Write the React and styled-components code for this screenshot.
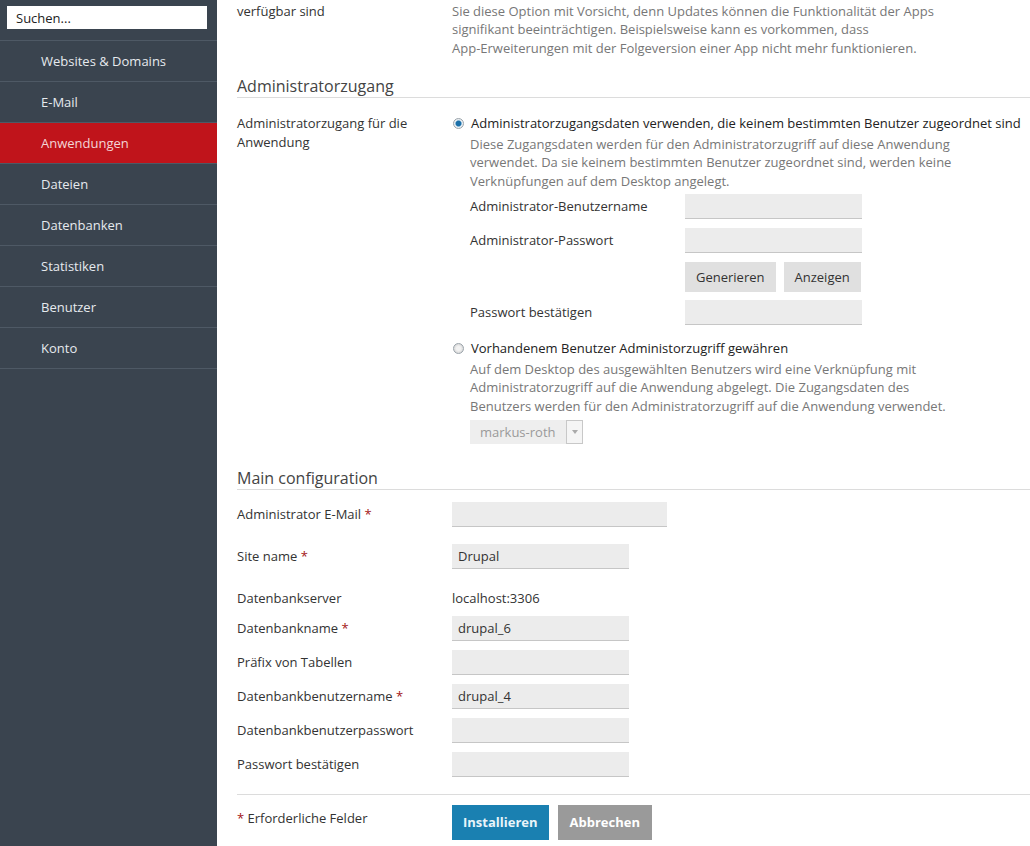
import styled, { createGlobalStyle } from "styled-components";

const GlobalStyle = createGlobalStyle`
  html, body {
    margin: 0;
    padding: 0;
    background: #fff;
    font-family: "Open Sans", "Liberation Sans", sans-serif;
    font-size: 13px;
    color: #333;
  }
  * { box-sizing: border-box; }
`;

const Page = styled.div`
  display: flex;
  height: 846px;
  overflow: hidden;
`;

const Sidebar = styled.nav`
  width: 217px;
  flex-shrink: 0;
  background: #3a444f;
  display: flex;
  flex-direction: column;
`;

const SearchWrap = styled.div`
  padding: 6px 10px 11px 7px;
  border-bottom: 1px solid #4e5965;
`;

const Search = styled.input`
  width: 200px;
  height: 23px;
  border: none;
  outline: none;
  padding: 0 9px;
  font-family: inherit;
  font-size: 13px;
  color: #333;
  background: #fff;
  &::placeholder { color: #222; }
`;

const NavItem = styled.a`
  display: flex;
  align-items: center;
  height: 41px;
  padding-left: 41px;
  color: ${(p) => (p.active ? "#f3d6d6" : "#e6eaee")};
  background: ${(p) => (p.active ? "#c0141b" : "transparent")};
  border-bottom: 1px solid #4e5965;
  font-size: 13px;
  text-decoration: none;
`;

/* page is scrolled a little: the first line sits just above the fold */
const Main = styled.main`
  flex: 1;
  padding: 0 0 0 20px;
  margin-top: -17px;
`;

const Row = styled.div`
  display: grid;
  grid-template-columns: 215px 1fr;
  align-items: ${(p) => (p.top ? "start" : "center")};
  margin-bottom: ${(p) => p.mb || 0}px;
  line-height: 18.5px;
`;

const Label = styled.div`
  color: #333;
`;

const Desc = styled.div`
  color: #777;
  line-height: 18.5px;
  margin-top: ${(p) => p.mt || 0}px;
`;

const Line = styled.span`
  display: block;
  white-space: nowrap;
`;

const Heading = styled.h3`
  margin: ${(p) => p.mt || 0}px 0 ${(p) => p.mb || 0}px;
  padding-bottom: 1px;
  font-size: 16px;
  font-weight: 400;
  color: #444;
  line-height: 20px;
  border-bottom: 1px solid #dcdcdc;
`;

const Star = styled.span`
  color: #a31515;
`;

const Input = styled.input`
  display: block;
  width: ${(p) => p.w || 177}px;
  height: 25px;
  border: none;
  border-bottom: 1px solid #c6c6c6;
  background: #ececec;
  padding: 0 6px;
  font-family: inherit;
  font-size: 13px;
  color: #333;
  outline: none;
`;

const Option = styled.div`
  margin-bottom: ${(p) => p.mb || 0}px;
`;

const RadioLine = styled.label`
  display: flex;
  align-items: center;
  gap: 7px;
  color: #222;
  margin-left: 1px;
`;

const Radio = styled.span`
  width: 11px;
  height: 11px;
  border-radius: 50%;
  border: 1px solid #9aa3aa;
  background: ${(p) =>
    p.checked
      ? "radial-gradient(circle, #1b6fa8 0 2.5px, #7fb3d6 3px, #e9eef2 3.6px)"
      : "radial-gradient(circle, #f2f2f2 0 2px, #d6d6d6 5px)"};
  flex-shrink: 0;
`;

const OptionBody = styled.div`
  padding-left: 18px;
`;

const SubGrid = styled.div`
  display: grid;
  grid-template-columns: 215px 177px;
  row-gap: 9px;
  align-items: center;
  margin-top: 4px;
`;

const ButtonPair = styled.div`
  display: flex;
  gap: 8px;
  grid-column: 2;
  margin-bottom: -1px;
`;

const GrayButton = styled.button`
  height: 30px;
  padding: 0 ${(p) => p.px || 10}px;
  border: none;
  background: #e0e0e0;
  font-family: inherit;
  font-size: 13px;
  color: #333;
`;

const SelectBox = styled.div`
  display: flex;
  align-items: center;
  width: 113px;
  height: 24px;
  margin-top: 5px;
  background: #eeeeee;
  color: #9a9a9a;
  padding-left: 10px;
`;

const SelectText = styled.span`
  flex: 1;
`;

const Arrow = styled.span`
  width: 17px;
  height: 24px;
  border: 1px solid #c8c8c8;
  background: #f5f5f5;
  display: flex;
  align-items: center;
  justify-content: center;
  &::after {
    content: "";
    border-left: 3px solid transparent;
    border-right: 3px solid transparent;
    border-top: 4px solid #aaa;
  }
`;

const Value = styled.div`
  color: #333;
`;

const Footer = styled.div`
  display: grid;
  grid-template-columns: 215px 1fr;
  border-top: 1px solid #dcdcdc;
  margin-top: 17px;
  padding-top: 10px;
`;

const FooterNote = styled.div`
  padding-top: 4px;
  color: #333;
`;

const Actions = styled.div`
  display: flex;
  gap: 9px;
`;

const PrimaryButton = styled.button`
  height: 35px;
  padding: 0 ${(p) => p.px || 13}px;
  border: none;
  background: ${(p) => p.bg};
  color: ${(p) => p.fg || "#fff"};
  font-family: inherit;
  font-size: 13px;
  font-weight: 700;
`;

const navItems = [
  "Websites & Domains",
  "E-Mail",
  "Anwendungen",
  "Dateien",
  "Datenbanken",
  "Statistiken",
  "Benutzer",
  "Konto",
];

const dbRows = [
  { label: "Datenbankname", req: true, value: "drupal_6" },
  { label: "Präfix von Tabellen", value: "" },
  { label: "Datenbankbenutzername", req: true, value: "drupal_4" },
  { label: "Datenbankbenutzerpasswort", value: "" },
  { label: "Passwort bestätigen", value: "" },
];

export default function App() {
  return (
    <>
      <GlobalStyle />
      <Page>
        <Sidebar>
          <SearchWrap>
            <Search placeholder="Suchen..." />
          </SearchWrap>
          {navItems.map((item) => (
            <NavItem key={item} active={item === "Anwendungen"}>
              {item}
            </NavItem>
          ))}
        </Sidebar>

        <Main>
          <Row top mb={19}>
            <Label>
              <Line>Automatisch aktualisieren, wenn Updates</Line>
              <Line>verfügbar sind</Line>
            </Label>
            <Desc>
              <Line>Apps werden automatisch aktualisiert, sobald Updates verfügbar sind. Verwenden</Line>
              <Line>Sie diese Option mit Vorsicht, denn Updates können die Funktionalität der Apps</Line>
              <Line>signifikant beeinträchtigen. Beispielsweise kann es vorkommen, dass</Line>
              <Line>App-Erweiterungen mit der Folgeversion einer App nicht mehr funktionieren.</Line>
            </Desc>
          </Row>

          <Heading mb={16}>Administratorzugang</Heading>

          <Row top>
            <Label>
              <Line>Administratorzugang für die</Line>
              <Line>Anwendung</Line>
            </Label>
            <div>
              <Option mb={14}>
                <RadioLine>
                  <Radio checked />
                  Administratorzugangsdaten verwenden, die keinem bestimmten Benutzer zugeordnet sind
                </RadioLine>
                <OptionBody>
                  <Desc mt={2}>
                    <Line>Diese Zugangsdaten werden für den Administratorzugriff auf diese Anwendung</Line>
                    <Line>verwendet. Da sie keinem bestimmten Benutzer zugeordnet sind, werden keine</Line>
                    <Line>Verknüpfungen auf dem Desktop angelegt.</Line>
                  </Desc>
                  <SubGrid>
                    <Label>Administrator-Benutzername</Label>
                    <Input />
                    <Label>Administrator-Passwort</Label>
                    <Input type="password" />
                    <ButtonPair>
                      <GrayButton px={11}>Generieren</GrayButton>
                      <GrayButton px={11}>Anzeigen</GrayButton>
                    </ButtonPair>
                    <Label>Passwort bestätigen</Label>
                    <Input type="password" />
                  </SubGrid>
                </OptionBody>
              </Option>

              <Option>
                <RadioLine>
                  <Radio />
                  Vorhandenem Benutzer Administorzugriff gewähren
                </RadioLine>
                <OptionBody>
                  <Desc mt={2}>
                    <Line>Auf dem Desktop des ausgewählten Benutzers wird eine Verknüpfung mit</Line>
                    <Line>Administratorzugriff auf die Anwendung abgelegt. Die Zugangsdaten des</Line>
                    <Line>Benutzers werden für den Administratorzugriff auf die Anwendung verwendet.</Line>
                  </Desc>
                  <SelectBox>
                    <SelectText>markus-roth</SelectText>
                    <Arrow />
                  </SelectBox>
                </OptionBody>
              </Option>
            </div>
          </Row>

          <Heading mt={24} mb={12}>Main configuration</Heading>

          <Row mb={17}>
            <Label>
              Administrator E-Mail <Star>*</Star>
            </Label>
            <Input w={215} />
          </Row>
          <Row mb={20}>
            <Label>
              Site name <Star>*</Star>
            </Label>
            <Input defaultValue="Drupal" />
          </Row>
          <Row mb={8}>
            <Label>Datenbankserver</Label>
            <Value>localhost:3306</Value>
          </Row>
          {dbRows.map((r, i) => (
            <Row key={r.label} mb={i < dbRows.length - 1 ? 9 : 0}>
              <Label>
                {r.label} {r.req && <Star>*</Star>}
              </Label>
              <Input defaultValue={r.value} />
            </Row>
          ))}

          <Footer>
            <FooterNote>
              <Star>*</Star> Erforderliche Felder
            </FooterNote>
            <Actions>
              <PrimaryButton bg="#1a80b1" fg="#e8f4fa" px={11}>Installieren</PrimaryButton>
              <PrimaryButton bg="#9a9a9a" px={12}>Abbrechen</PrimaryButton>
            </Actions>
          </Footer>
        </Main>
      </Page>
    </>
  );
}
